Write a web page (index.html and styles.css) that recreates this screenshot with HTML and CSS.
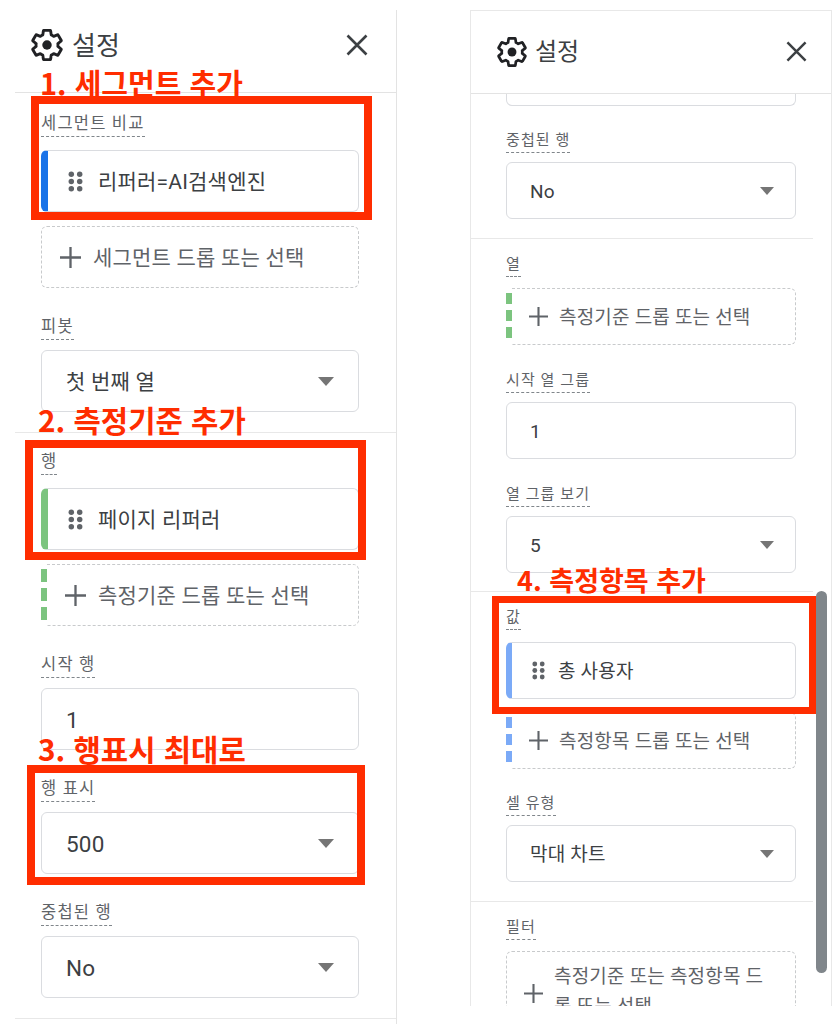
FILE: index.html
```html
<!DOCTYPE html>
<html lang="ko">
<head>
  <meta charset="UTF-8">
  <meta name="viewport" content="width=device-width, initial-scale=1.0">
  <title>설정</title>
  <link rel="stylesheet" href="styles.css">
</head>
<body>
  <svg class="defs" width="0" height="0">
    <symbol id="gear" viewBox="1.5 1.5 21 21">
      <path fill="none" stroke="currentColor" stroke-width="1.9" stroke-linejoin="round" d="M19.14 12.94c.04-.3.06-.61.06-.94 0-.32-.02-.64-.07-.94l2.03-1.58c.18-.14.23-.41.12-.61l-1.92-3.32c-.12-.22-.37-.29-.59-.22l-2.39.96c-.5-.38-1.03-.7-1.62-.94l-.36-2.54c-.04-.24-.24-.41-.48-.41h-3.84c-.24 0-.43.17-.47.41l-.36 2.54c-.59.24-1.13.57-1.62.94l-2.39-.96c-.22-.08-.47 0-.59.22L2.74 8.87c-.12.21-.08.47.12.61l2.03 1.58c-.05.3-.09.63-.09.94s.02.64.07.94l-2.03 1.58c-.18.14-.23.41-.12.61l1.92 3.32c.12.22.37.29.59.22l2.39-.96c.5.38 1.03.7 1.62.94l.36 2.54c.05.24.24.41.48.41h3.84c.24 0 .44-.17.47-.41l.36-2.54c.59-.24 1.13-.56 1.62-.94l2.39.96c.22.08.47 0 .59-.22l1.92-3.32c.12-.22.07-.47-.12-.61l-2.01-1.58z"/>
      <circle cx="12" cy="12" r="3.1" fill="currentColor"/>
    </symbol>
    <symbol id="close" viewBox="0 0 22 22">
      <path fill="none" stroke="currentColor" stroke-width="2.6" d="M1.5 1.5l19 19M20.5 1.5l-19 19"/>
    </symbol>
    <symbol id="plus" viewBox="0 0 20 20">
      <path fill="none" stroke="currentColor" stroke-width="2.2" d="M10 0v20M0 10h20"/>
    </symbol>
    <symbol id="grip" viewBox="0 0 14 20">
      <circle cx="3" cy="3" r="2.6"/><circle cx="11" cy="3" r="2.6"/>
      <circle cx="3" cy="10" r="2.6"/><circle cx="11" cy="10" r="2.6"/>
      <circle cx="3" cy="17" r="2.6"/><circle cx="11" cy="17" r="2.6"/>
    </symbol>
  </svg>

  <div class="page">
    <aside class="panel panel-left">
      <header class="panel-head">
        <svg class="gear"><use href="#gear"/></svg>
        <h1>설정</h1>
        <svg class="close"><use href="#close"/></svg>
      </header>

      <section class="group group-first">
        <div class="field">
          <span class="label">세그먼트 비교</span>
          <div class="chip chip-blue">
            <svg class="grip"><use href="#grip"/></svg>
            <span class="text">리퍼러=AI검색엔진</span>
          </div>
          <div class="drop">
            <div class="add">
              <svg class="plus"><use href="#plus"/></svg>
              <span class="text">세그먼트 드롭 또는 선택</span>
            </div>
          </div>
        </div>
        <div class="field">
          <span class="label">피봇</span>
          <div class="select"><span class="text">첫 번째 열</span><i class="caret"></i></div>
        </div>
      </section>

      <section class="group">
        <div class="field">
          <span class="label">행</span>
          <div class="chip chip-green">
            <svg class="grip"><use href="#grip"/></svg>
            <span class="text">페이지 리퍼러</span>
          </div>
          <div class="drop">
            <i class="dashes dashes-green"></i>
            <div class="add">
              <svg class="plus"><use href="#plus"/></svg>
              <span class="text">측정기준 드롭 또는 선택</span>
            </div>
          </div>
        </div>
        <div class="field">
          <span class="label">시작 행</span>
          <div class="select"><span class="num">1</span></div>
        </div>
        <div class="field">
          <span class="label">행 표시</span>
          <div class="select"><span class="num">500</span><i class="caret"></i></div>
        </div>
        <div class="field">
          <span class="label">중첩된 행</span>
          <div class="select"><span class="num">No</span><i class="caret"></i></div>
        </div>
      </section>
    </aside>

    <aside class="panel panel-right">
      <header class="panel-head">
        <svg class="gear"><use href="#gear"/></svg>
        <h1>설정</h1>
        <svg class="close"><use href="#close"/></svg>
      </header>

      <section class="group">
        <div class="stub"></div>
        <div class="field">
          <span class="label">중첩된 행</span>
          <div class="select"><span class="num">No</span><i class="caret"></i></div>
        </div>
      </section>

      <section class="group group-snug">
        <div class="field">
          <span class="label">열</span>
          <div class="drop">
            <i class="dashes dashes-green"></i>
            <div class="add">
              <svg class="plus"><use href="#plus"/></svg>
              <span class="text">측정기준 드롭 또는 선택</span>
            </div>
          </div>
        </div>
        <div class="field">
          <span class="label">시작 열 그룹</span>
          <div class="select"><span class="num">1</span></div>
        </div>
        <div class="field">
          <span class="label">열 그룹 보기</span>
          <div class="select"><span class="num">5</span><i class="caret"></i></div>
        </div>
      </section>

      <section class="group">
        <div class="field">
          <span class="label">값</span>
          <div class="chip chip-sky">
            <svg class="grip"><use href="#grip"/></svg>
            <span class="text">총 사용자</span>
          </div>
          <div class="drop">
            <i class="dashes dashes-sky"></i>
            <div class="add">
              <svg class="plus"><use href="#plus"/></svg>
              <span class="text">측정항목 드롭 또는 선택</span>
            </div>
          </div>
        </div>
        <div class="field field-snug">
          <span class="label">셀 유형</span>
          <div class="select"><span class="text">막대 차트</span><i class="caret"></i></div>
        </div>
      </section>

      <section class="group">
        <div class="field">
          <span class="label">필터</span>
          <div class="drop">
            <div class="add add-wrap">
              <svg class="plus"><use href="#plus"/></svg>
              <span class="text">측정기준 또는 측정항목 드롭 또는 선택</span>
            </div>
          </div>
        </div>
      </section>

      <div class="scrollbar"></div>
    </aside>

    <!-- annotations drawn on top of the screenshots -->
    <div class="mark mark-1"></div>
    <div class="mark mark-2"></div>
    <div class="mark mark-3"></div>
    <div class="mark mark-4"></div>
    <div class="note note-1">1. 세그먼트 추가</div>
    <div class="note note-2">2. 측정기준 추가</div>
    <div class="note note-3">3. 행표시 최대로</div>
    <div class="note note-4">4. 측정항목 추가</div>
  </div>
</body>
</html>
```

FILE: styles.css
```css
html, body {
  margin: 0;
  padding: 0;
  height: 100%;
  overflow: hidden;
  background: #fff;
}
body {
  font-family: Roboto, "Noto Sans CJK KR", sans-serif;
  color: #3c4043;
}
.defs {
  position: absolute;
}
.page {
  position: relative;
  display: flex;
  align-items: flex-start;
  width: 839px;
  height: 1024px;
}

/* panels: the right one is the same UI at a smaller scale */
.panel {
  box-sizing: border-box;
  overflow: hidden;
  position: relative;
}
.panel-left {
  --ctl-h: 62px;
  --ctl-font: 21px;
  --label-font: 16.5px;
  --label-space: 1.2px;
  --label-h: 24px;
  --label-gap: 10px;
  --chip-top: 13px;
  --drop-top: 14px;
  --field-gap: 28px;
  --pad-l: 26px;
  --pad-r: 37px;
  --value-l: 24px;
  --caret-r: 24px;
  --caret-w: 8px;
  --caret-h: 9px;
  --bar-w: 6px;
  --chip-bar: 7px;
  --chip-pad: 20px;
  --grip-w: 15px;
  --grip-h: 21px;
  --grip-gap: 15px;
  --plus: 21px;
  --plus-gap: 12px;
  --add-pad: 18px;
  --dash: 13px;
  --dash-gap: 6px;
  --group-top: 18px;
  --group-bottom: 20px;
  margin: 10px 0 0 15px;
  width: 382px;
  height: 1014px;
  border-right: 1px solid #e3e3e3;
}
.panel-right {
  --ctl-h: 57px;
  --ctl-font: 19px;
  --label-font: 15px;
  --label-space: 1.1px;
  --label-h: 22px;
  --label-gap: 9px;
  --chip-top: 12px;
  --drop-top: 11px;
  --field-gap: 26px;
  --pad-l: 35px;
  --pad-r: 17px;
  --value-l: 23px;
  --caret-r: 21px;
  --caret-w: 7px;
  --caret-h: 8px;
  --bar-w: 6px;
  --chip-bar: 6px;
  --chip-pad: 20px;
  --grip-w: 13px;
  --grip-h: 19px;
  --grip-gap: 13px;
  --plus: 19px;
  --plus-gap: 11px;
  --add-pad: 17px;
  --dash: 11px;
  --dash-gap: 6px;
  --group-top: 16px;
  --group-bottom: 19px;
  margin: 10px 0 0 73px;
  width: 362px;
  height: 996px;
  border: 1px solid #e8e8e8;
  border-bottom: 0;
}

.panel-head {
  display: flex;
  align-items: center;
  box-sizing: border-box;
  border-bottom: 1px solid #e3e3e3;
}
.panel-head h1 {
  margin: 0 0 4px;
  font-weight: 400;
  color: #3c4043;
}
.panel-left .panel-head {
  height: 83px;
  padding: 0 28px 12px 16px;
}
.panel-left h1 {
  font-size: 26px;
  margin-left: 9px;
}
.panel-left .gear {
  width: 32px;
  height: 32px;
}
.panel-left .close {
  width: 22px;
  height: 22px;
}
.panel-right .panel-head {
  height: 83px;
  padding: 0 24px 1px 26px;
}
.panel-right h1 {
  font-size: 24px;
  margin-left: 8px;
}
.panel-right .gear {
  width: 30px;
  height: 30px;
}
.panel-right .close {
  width: 21px;
  height: 21px;
}
.gear {
  color: #202124;
}
.close {
  margin-left: auto;
  color: #3c4043;
}

.group {
  padding: var(--group-top) var(--pad-r) var(--group-bottom) var(--pad-l);
  border-bottom: 1px solid #e8e8e8;
}
.group-first {
  padding-top: 20px;
}
.group-snug {
  padding-bottom: 18px;
}
.panel-right .group {
  margin-right: 18px;
}
.panel-right .group:nth-of-type(1) {
  padding-top: 0;
}
.field + .field {
  margin-top: var(--field-gap);
}
.field + .field-snug {
  margin-top: 25px;
}
.stub {
  box-sizing: border-box;
  height: 12px;
  margin-bottom: 25px;
  border: 1px solid #dadce0;
  border-top: 0;
  border-radius: 0 0 6px 6px;
}

.label {
  display: block;
  width: fit-content;
  box-sizing: border-box;
  height: var(--label-h);
  line-height: calc(var(--label-h) - 3px);
  margin-bottom: var(--label-gap);
  font-size: var(--label-font);
  letter-spacing: var(--label-space);
  color: #5f6368;
  border-bottom: 1px dashed #80868b;
}

.select, .chip {
  display: flex;
  align-items: center;
  box-sizing: border-box;
  height: var(--ctl-h);
  font-size: var(--ctl-font);
  letter-spacing: 0.2px;
  border: 1px solid #dadce0;
  border-radius: 6px;
  background: #fff;
}
.select {
  justify-content: space-between;
  padding: 0 var(--caret-r) 0 var(--value-l);
}
/* hangul sits low in the line box, latin values a touch high */
.text {
  padding-bottom: 3px;
}
.num {
  padding-top: 1px;
}
.panel-left .num {
  font-size: 22.5px;
}
.caret {
  width: 0;
  height: 0;
  border-left: var(--caret-w) solid transparent;
  border-right: var(--caret-w) solid transparent;
  border-top: var(--caret-h) solid #757575;
}

.chip {
  margin-top: var(--chip-top);
  padding-left: var(--chip-pad);
  border-left-width: var(--chip-bar);
}
.chip-blue {
  border-left-color: #1a73e8;
}
.chip-green {
  border-left-color: #7cc47f;
}
.chip-sky {
  border-left-color: #7baaf7;
}
.grip {
  flex: none;
  width: var(--grip-w);
  height: var(--grip-h);
  margin-right: var(--grip-gap);
  fill: #5f6368;
}

.drop {
  display: flex;
  margin-top: var(--drop-top);
}
.panel-right .chip + .drop {
  margin-top: 13px;
}
.dashes {
  flex: none;
  width: var(--bar-w);
  margin: 5px 0;
}
.dashes-green {
  background: repeating-linear-gradient(#7cc47f 0 var(--dash), transparent var(--dash) calc(var(--dash) + var(--dash-gap)));
}
.dashes-sky {
  background: repeating-linear-gradient(#7baaf7 0 var(--dash), transparent var(--dash) calc(var(--dash) + var(--dash-gap)));
}
.add {
  flex: 1;
  display: flex;
  align-items: center;
  box-sizing: border-box;
  height: var(--ctl-h);
  padding-left: var(--add-pad);
  font-size: var(--ctl-font);
  letter-spacing: 0.2px;
  color: #5f6368;
  border: 1px dashed #c8cacc;
  border-radius: 6px;
}
.dashes + .add {
  border-left: 0;
  border-radius: 0 6px 6px 0;
}
.plus {
  flex: none;
  width: var(--plus);
  height: var(--plus);
  margin-right: var(--plus-gap);
  color: #5f6368;
}
.add-wrap {
  height: 84px;
  line-height: 30px;
  padding-right: 24px;
}

.scrollbar {
  position: absolute;
  top: 580px;
  right: 4px;
  width: 11px;
  height: 382px;
  border-radius: 6px;
  background: #80868b;
}

/* red annotation boxes and captions */
.mark {
  position: absolute;
  box-sizing: border-box;
  border: 8px solid #ff2d00;
}
.mark-1 {
  left: 31px;
  top: 96px;
  width: 341px;
  height: 124px;
}
.mark-2 {
  left: 25px;
  top: 440px;
  width: 341px;
  height: 120px;
}
.mark-3 {
  left: 27px;
  top: 765px;
  width: 338px;
  height: 120px;
}
.mark-4 {
  left: 492px;
  top: 596px;
  width: 324px;
  height: 118px;
  border-width: 7px;
}
.note {
  position: absolute;
  font-family: "Noto Sans CJK KR", sans-serif;
  font-weight: 700;
  font-size: 29px;
  line-height: 32px;
  color: #ff2d00;
  white-space: nowrap;
}
.note-1 {
  left: 40px;
  top: 66px;
}
.note-2 {
  left: 38px;
  top: 404px;
  font-size: 29.7px;
}
.note-3 {
  left: 38px;
  top: 733px;
  font-size: 29.7px;
}
.note-4 {
  left: 517px;
  top: 564px;
  font-size: 27px;
}
```
